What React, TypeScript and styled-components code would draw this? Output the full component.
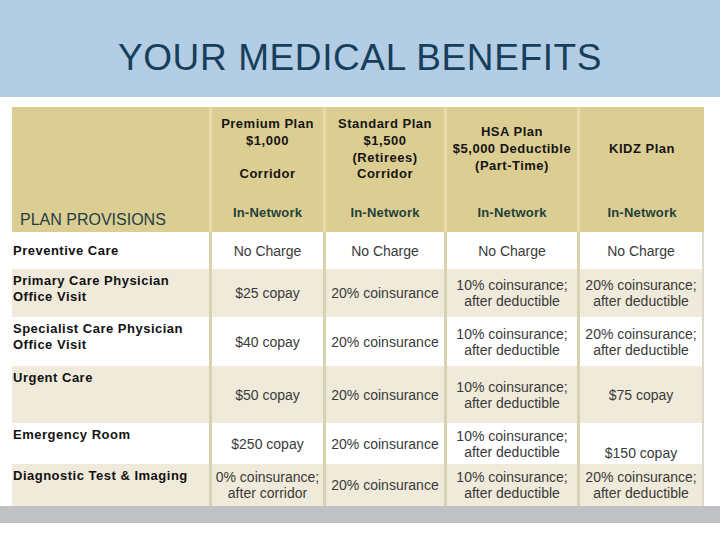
import React from "react";
import styled, { createGlobalStyle } from "styled-components";

const GlobalStyle = createGlobalStyle`
  html, body {
    margin: 0;
    padding: 0;
    background: #ffffff;
  }
  body {
    font-family: "Liberation Sans", Arial, sans-serif;
  }
`;

const Page = styled.div`
  width: 720px;
  height: 540px;
  overflow: hidden;
  display: flex;
  flex-flow: column;
`;

const Banner = styled.header`
  height: 97px;
  background: #b3cde4;
  display: flex;
  justify-content: center;
  align-items: flex-start;
  padding-top: 38px;
  box-sizing: border-box;
`;

const Title = styled.h1`
  margin: 0;
  font-size: 37px;
  line-height: 40px;
  font-weight: normal;
  letter-spacing: 0.6px;
  color: #173f5c;
`;

const TableWrap = styled.div`
  margin: 10px 0 0 12px;
`;

const Table = styled.table`
  width: 692px;
  table-layout: fixed;
  border-collapse: separate;
  border-spacing: 0;
  color: #2b2b2b;
`;

const PlanHead = styled.th<{ $first?: boolean }>`
  background: #dccd92;
  border-left: ${({ $first }) => ($first ? "none" : "3px solid #e5daa8")};
  font-size: 13px;
  font-weight: bold;
  letter-spacing: 0.5px;
  line-height: 16.7px;
  color: #151515;
  text-align: center;
  vertical-align: middle;
  padding: 0;
`;

const ProvisionsHead = styled.th`
  background: #dccd92;
  font-size: 16px;
  font-weight: normal;
  line-height: 18px;
  color: #1f4045;
  text-align: left;
  vertical-align: bottom;
  padding: 0 0 3px 8px;
`;

const NetworkHead = styled.th`
  background: #dccd92;
  border-left: 3px solid #e5daa8;
  font-size: 13px;
  font-weight: bold;
  letter-spacing: 0.2px;
  color: #23413a;
  text-align: center;
  vertical-align: middle;
  padding: 0;
`;

const Row = styled.tr<{ $shade?: boolean }>`
  background: ${({ $shade }) => ($shade ? "#f0eadb" : "#ffffff")};
`;

const Label = styled.td<{ $middle?: boolean }>`
  font-size: 13px;
  font-weight: bold;
  letter-spacing: 0.5px;
  line-height: 16px;
  color: #111111;
  vertical-align: ${({ $middle }) => ($middle ? "middle" : "top")};
  padding: ${({ $middle }) => ($middle ? "0 0 0 1px" : "4px 0 0 1px")};
`;

const Cell = styled.td<{ $bottom?: boolean; $last?: boolean }>`
  border-left: 3px solid #d8d2ae;
  border-right: ${({ $last }) => ($last ? "2px solid #ddd9cc" : "none")};
  font-size: 14px;
  line-height: 16px;
  color: #3a3a3a;
  text-align: center;
  vertical-align: ${({ $bottom }) => ($bottom ? "bottom" : "middle")};
  padding: ${({ $bottom }) => ($bottom ? "0 0 3px" : "0")};
`;

const BottomBar = styled.div`
  height: 17px;
  background: #c0c1c5;
`;

type Value = string | { text: string; bottom?: boolean };

const rows: { label: string; height: number; middle?: boolean; values: Value[] }[] = [
  {
    label: "Preventive Care",
    height: 37,
    middle: true,
    values: ["No Charge", "No Charge", "No Charge", "No Charge"],
  },
  {
    label: "Primary Care Physician\nOffice Visit",
    height: 48,
    values: ["$25 copay", "20% coinsurance", "10% coinsurance;\nafter deductible", "20% coinsurance;\nafter deductible"],
  },
  {
    label: "Specialist Care Physician\nOffice Visit",
    height: 49,
    values: ["$40 copay", "20% coinsurance", "10% coinsurance;\nafter deductible", "20% coinsurance;\nafter deductible"],
  },
  {
    label: "Urgent Care",
    height: 57,
    values: ["$50 copay", "20% coinsurance", "10% coinsurance;\nafter deductible", "$75 copay"],
  },
  {
    label: "Emergency Room",
    height: 41,
    values: ["$250 copay", "20% coinsurance", "10% coinsurance;\nafter deductible", { text: "$150 copay", bottom: true }],
  },
  {
    label: "Diagnostic Test & Imaging",
    height: 42,
    values: ["0% coinsurance;\nafter corridor", "20% coinsurance", "10% coinsurance;\nafter deductible", "20% coinsurance;\nafter deductible"],
  },
];

function Lines({ text }: { text: string }) {
  const parts = text.split("\n");
  return (
    <>
      {parts.map((p, i) => (
        <React.Fragment key={i}>
          {i > 0 && <br />}
          {p}
        </React.Fragment>
      ))}
    </>
  );
}

export default function App() {
  return (
    <Page>
      <GlobalStyle />
      <Banner>
        <Title>YOUR MEDICAL BENEFITS</Title>
      </Banner>

      <TableWrap>
        <Table>
          <colgroup>
            <col style={{ width: 197 }} />
            <col style={{ width: 114 }} />
            <col style={{ width: 121 }} />
            <col style={{ width: 133 }} />
            <col style={{ width: 127 }} />
          </colgroup>
          <thead>
            <tr style={{ height: 85 }}>
              <ProvisionsHead rowSpan={2}>PLAN PROVISIONS</ProvisionsHead>
              <PlanHead>
                Premium Plan
                <br />
                $1,000
                <br />
                <br />
                Corridor
              </PlanHead>
              <PlanHead>
                Standard Plan
                <br />
                $1,500
                <br />
                (Retirees)
                <br />
                Corridor
              </PlanHead>
              <PlanHead>
                HSA Plan
                <br />
                $5,000 Deductible
                <br />
                (Part-Time)
              </PlanHead>
              <PlanHead>KIDZ Plan</PlanHead>
            </tr>
            <tr style={{ height: 40 }}>
              <NetworkHead>In-Network</NetworkHead>
              <NetworkHead>In-Network</NetworkHead>
              <NetworkHead>In-Network</NetworkHead>
              <NetworkHead>In-Network</NetworkHead>
            </tr>
          </thead>
          <tbody>
            {rows.map((r, i) => (
              <Row key={r.label} $shade={i % 2 === 1} style={{ height: r.height }}>
                <Label $middle={r.middle}>
                  <Lines text={r.label} />
                </Label>
                {r.values.map((v, j) => {
                  const text = typeof v === "string" ? v : v.text;
                  const bottom = typeof v === "string" ? false : v.bottom;
                  return (
                    <Cell key={j} $bottom={bottom} $last={j === r.values.length - 1}>
                      <Lines text={text} />
                    </Cell>
                  );
                })}
              </Row>
            ))}
          </tbody>
        </Table>
      </TableWrap>

      <BottomBar />
    </Page>
  );
}
